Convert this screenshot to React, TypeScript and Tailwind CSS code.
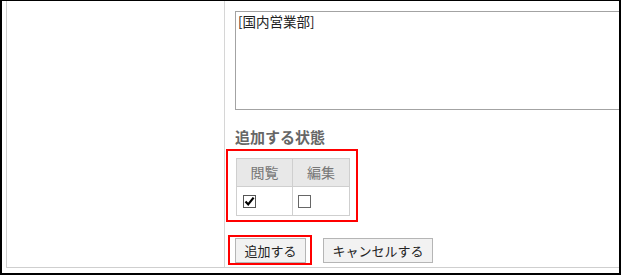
import React from "react";

const font = { fontFamily: '"Noto Sans CJK JP", "Noto Sans", sans-serif' };

function Check({ checked }: { checked: boolean }) {
  return (
    <div className={`w-[13px] h-[13px] border bg-white flex items-center justify-center ${checked ? "border-[#555]" : "border-[#666]"}`}>
      {checked && (
        <svg width="11" height="11" viewBox="0 0 11 11">
          <path d="M1.5 5.5 L4.2 8.4 L9.6 1.6" stroke="#000" strokeWidth="2.2" fill="none" />
        </svg>
      )}
    </div>
  );
}

export default function App() {
  return (
    <div
      className="w-[621px] h-[275px] overflow-hidden bg-white border-black border-l-2 border-t border-r-2 border-b-2 box-border"
      style={font}
    >
      <div className="ml-[4px] h-[267px] border-l border-b border-[#cfcfcf] flex">
        <div className="w-[218px] shrink-0 border-r border-[#d6d6d6]" />
        <div className="flex-1 min-w-0 pl-[10px] pt-[10px] flex flex-col">
          <div className="w-[420px] h-[99px] shrink-0 border border-[#a3a3a3] bg-white px-[2px] pt-[1px] text-[13.5px] leading-[16px] text-[#222]">
            [国内営業部]
          </div>
          <div className="mt-[17px] text-[15px] leading-[20px] font-bold text-[#666]">追加する状態</div>
          <div className="mt-[2px] ml-[-9px] w-[132px] border-2 border-[#ff0000] pt-[7px] pl-[8px] pb-[4px]">
            <div className="w-[114px] border border-[#cfcfcf]">
              <div className="flex h-[28px] bg-[#e8e8e8] border-b border-[#cfcfcf] text-[14px] text-[#777]">
                <div className="w-[56px] border-r border-[#cfcfcf] flex items-center justify-center">閲覧</div>
                <div className="flex-1 flex items-center justify-center">編集</div>
              </div>
              <div className="flex h-[28px]">
                <div className="w-[56px] border-r border-[#cfcfcf] flex items-center pl-[6px]">
                  <Check checked={true} />
                </div>
                <div className="flex-1 flex items-center pl-[5px]">
                  <Check checked={false} />
                </div>
              </div>
            </div>
          </div>
          <div className="mt-[13px] ml-[-7px] flex items-start">
            <div className="w-[84px] h-[30px] border-2 border-[#ff0000] pt-[1px] pl-[5px]">
              <div className="w-[71px] h-[25px] border border-[#b5b5b5] bg-[#f2f2f2] flex items-center justify-center text-[13px] text-[#222]">
                追加する
              </div>
            </div>
            <div className="ml-[11px] mt-[3px] w-[110px] h-[25px] border border-[#b5b5b5] bg-[#f2f2f2] flex items-center justify-center text-[13px] text-[#222]">
              キャンセルする
            </div>
          </div>
        </div>
      </div>
    </div>
  );
}
